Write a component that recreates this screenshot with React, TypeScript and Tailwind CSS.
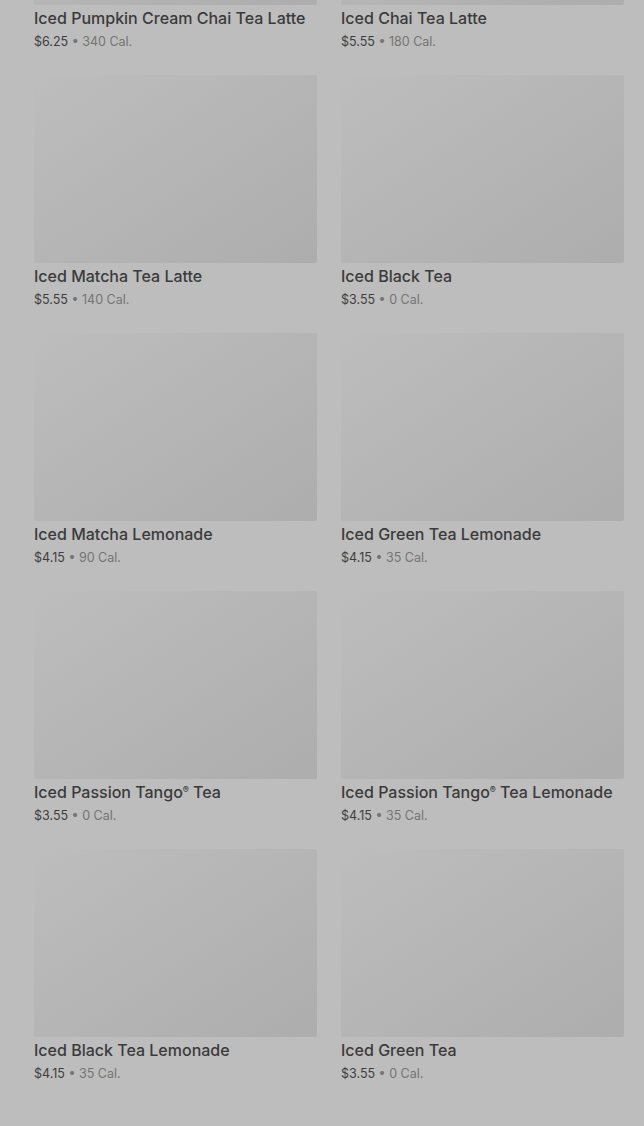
import React from 'react';

interface Drink {
  name: string;
  price: string;
  cal: string;
}

const drinks: Drink[] = [
  { name: 'Iced Pumpkin Cream Chai Tea Latte', price: '$6.25', cal: '340 Cal.' },
  { name: 'Iced Chai Tea Latte', price: '$5.55', cal: '180 Cal.' },
  { name: 'Iced Matcha Tea Latte', price: '$5.55', cal: '140 Cal.' },
  { name: 'Iced Black Tea', price: '$3.55', cal: '0 Cal.' },
  { name: 'Iced Matcha Lemonade', price: '$4.15', cal: '90 Cal.' },
  { name: 'Iced Green Tea Lemonade', price: '$4.15', cal: '35 Cal.' },
  { name: 'Iced Passion Tango® Tea', price: '$3.55', cal: '0 Cal.' },
  { name: 'Iced Passion Tango® Tea Lemonade', price: '$4.15', cal: '35 Cal.' },
  { name: 'Iced Black Tea Lemonade', price: '$4.15', cal: '35 Cal.' },
  { name: 'Iced Green Tea', price: '$3.55', cal: '0 Cal.' },
];

// render the ® sign small and raised, like the menu does
const renderName = (name: string) =>
  name.split('®').map((part, i, arr) => (
    <React.Fragment key={i}>
      {part}
      {i < arr.length - 1 && <sup className="text-[9px] top-[-0.6em]">®</sup>}
    </React.Fragment>
  ));

const DrinkCard = ({ drink }: { drink: Drink }) => (
  <div className="flex flex-col">
    <div className="h-[188px] w-full rounded-[2px] bg-gradient-to-br from-[#bdbdbd] via-[#b5b5b5] to-[#adadad]" />
    <div className="mt-px text-[16px] leading-[24px] font-medium text-[#3b3b3b]">
      {renderName(drink.name)}
    </div>
    <div className="mt-[3px] text-[12.5px] leading-[18px] text-[#3e3e3e]">
      {drink.price}
      <span className="text-[#747474]"> • {drink.cal}</span>
    </div>
  </div>
);

export default function App() {
  return (
    <div
      className="h-[1126px] overflow-hidden bg-[#bdbdbd]"
      style={{ fontFamily: 'Inter, "Noto Sans", sans-serif' }}
    >
      <div className="mt-[-183px] grid grid-cols-2 gap-x-6 gap-y-[24px] pl-[34px] pr-5">
        {drinks.map((d) => (
          <DrinkCard key={d.name} drink={d} />
        ))}
      </div>
    </div>
  );
}
